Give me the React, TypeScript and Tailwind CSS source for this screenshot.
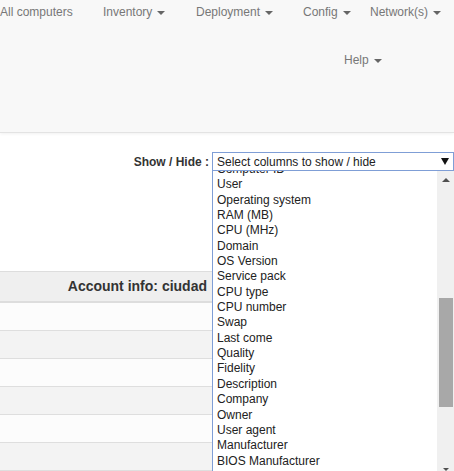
import React from 'react';

const navItems = [
  { label: 'All computers', caret: false, w: 'w-[103px]' },
  { label: 'Inventory', caret: true, w: 'w-[93px]' },
  { label: 'Deployment', caret: true, w: 'w-[107px]' },
  { label: 'Config', caret: true, w: 'w-[67px]' },
  { label: 'Network(s)', caret: true, w: 'w-[84px]' },
];

const columns = [
  'Computer ID',
  'User',
  'Operating system',
  'RAM (MB)',
  'CPU (MHz)',
  'Domain',
  'OS Version',
  'Service pack',
  'CPU type',
  'CPU number',
  'Swap',
  'Last come',
  'Quality',
  'Fidelity',
  'Description',
  'Company',
  'Owner',
  'User agent',
  'Manufacturer',
  'BIOS Manufacturer',
  'BIOS Version',
];

function Caret() {
  return (
    <span className="ml-[5px] mt-[1px] shrink-0 w-0 h-0 border-x-[4px] border-x-transparent border-t-[4px] border-t-[#666666]" />
  );
}

function NavLink({ label, caret, w = '' }: { label: string; caret: boolean; w?: string }) {
  return (
    <span className={`flex shrink-0 items-center text-[12px] leading-[24px] text-[#777777] whitespace-nowrap ${w}`}>
      <span>{label}</span>
      {caret && <Caret />}
    </span>
  );
}

export default function App() {
  return (
    <div
      className="relative w-[454px] h-[471px] overflow-hidden bg-white"
      style={{ fontFamily: '"Liberation Sans", Arial, sans-serif' }}
    >
      {/* Navbar */}
      <div className="h-[133px] bg-[#f8f8f8] border-b border-[#e3e3e3] shadow-[0_1px_3px_rgba(0,0,0,0.06)]">
        <div className="flex w-[454px]">
          {navItems.map((n) => (
            <NavLink key={n.label} label={n.label} caret={n.caret} w={n.w} />
          ))}
        </div>
        <div className="flex pl-[344px] mt-[24px]">
          <NavLink label="Help" caret />
        </div>
      </div>

      {/* Show / Hide */}
      <div className="flex items-center mt-[19px] h-[19px]">
        <div className="w-[212px] pr-[3px] text-right text-[12px] font-bold text-[#333333]">
          Show / Hide :
        </div>
        <div className="flex-1 h-[19px] flex items-center justify-between border border-[#7f9ed6] bg-white pl-[4px] pr-[4px] text-[12px] text-[#222222]">
          <span>Select columns to show / hide</span>
          <svg width="8" height="7" viewBox="0 0 8 7">
            <path d="M0 0 L8 0 L4 7 Z" fill="#111111" />
          </svg>
        </div>
      </div>

      {/* Table */}
      <div className="mt-[100px]">
        <div className="h-[32px] bg-[#efefef] border-t border-[#dddddd] border-b-2 border-b-[#dddddd] flex items-center">
          <div className="w-[212px] pr-[5px] text-right text-[14px] font-bold text-[#333333]">
            Account info: ciudad
          </div>
        </div>
        {[0, 1, 2, 3, 4, 5].map((i) => (
          <div
            key={i}
            className={`h-[28px] border-b border-[#dedede] ${i % 2 === 0 ? 'bg-[#fcfcfc]' : 'bg-[#f3f3f3]'}`}
          />
        ))}
      </div>

      {/* Dropdown list */}
      <div className="absolute left-[212px] top-[171px] w-[242px] h-[300px] bg-white border-l border-[#7f9ed6] flex">
        <div className="flex-1 overflow-hidden pl-[4px]">
          <div className="-mt-[9px]">
            {columns.map((c) => (
              <div key={c} className="h-[15.35px] leading-[15.35px] text-[12px] text-[#222222] whitespace-nowrap">
                {c}
              </div>
            ))}
          </div>
        </div>
        <div className="w-[17px] h-full bg-[#f0f0f0] flex flex-col items-center">
          <div className="h-[17px] flex items-center justify-center">
            <svg width="8" height="4" viewBox="0 0 8 4">
              <path d="M0 4 L8 4 L4 0 Z" fill="#505050" />
            </svg>
          </div>
          <div className="mt-[110px] w-[14px] h-[109px] bg-[#a8a8a8]" />
          <div className="mt-auto h-[3px] flex items-end justify-center overflow-hidden">
            <svg width="8" height="4" viewBox="0 0 8 4">
              <path d="M0 0 L8 0 L4 4 Z" fill="#505050" />
            </svg>
          </div>
        </div>
      </div>
    </div>
  );
}
